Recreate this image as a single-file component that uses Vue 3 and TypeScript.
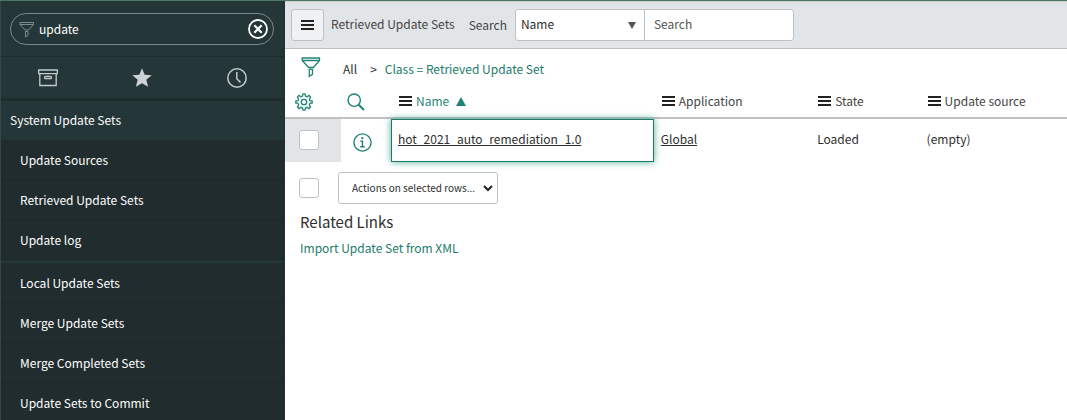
<script setup lang="ts">
import { ref } from 'vue'

interface Column {
  key: string
  label: string
  sorted?: boolean
}

const filterText = ref('update')
const searchField = ref('Name')
const searchText = ref('')
const action = ref('Actions on selected rows...')

const groups: string[][] = [
  ['Update Sources', 'Retrieved Update Sets', 'Update log'],
  ['Local Update Sets', 'Merge Update Sets', 'Merge Completed Sets', 'Update Sets to Commit'],
]

const columns: Column[] = [
  { key: 'name', label: 'Name', sorted: true },
  { key: 'application', label: 'Application' },
  { key: 'state', label: 'State' },
  { key: 'source', label: 'Update source' },
]
</script>

<template>
  <div class="page">
    <aside class="sidebar">
      <div class="filter-area">
        <div class="filter">
          <svg class="filter-icon" width="16" height="17" viewBox="0 0 16 17" fill="none" stroke="#7f8b8c">
            <path d="M1 1.5h13.500v2L9.500 9H6L1 3.500zM1 3.500h13.500M6.500 10.500h2.500v4l-2.500 1.500z" />
          </svg>
          <input v-model="filterText" aria-label="Filter navigator" type="text" />
          <button class="clear" type="button" aria-label="Clear filter">
            <svg width="20" height="20" viewBox="0 0 20 20" fill="none" stroke="#fff">
              <circle cx="10" cy="10" r="9" stroke-width="1.800" />
              <path d="M6.300 6.300l7.400 7.400M13.700 6.300l-7.400 7.400" stroke-width="2.200" />
            </svg>
          </button>
        </div>
      </div>
      <div class="tabs">
        <button type="button" aria-label="All applications">
          <svg width="20" height="18" viewBox="0 0 20 18" fill="none" stroke="#c3cacb" stroke-width="1.300">
            <path d="M.7 1h18.600v3.700H.7zM1.800 4.700v11.800h16.400V4.700" />
            <rect x="6.500" y="7.500" width="7" height="2.200" rx="1" />
          </svg>
        </button>
        <button type="button" aria-label="Favorites">
          <svg width="20" height="20" viewBox="0 0 20 20" fill="#cdd2d4">
            <path d="M10 .3l2.700 6.500 7 .4-5.400 4.500 1.800 7.100L10 15.200l-6.100 3.600 1.800-7.100L.3 7.200l7-.4z" />
          </svg>
        </button>
        <button type="button" aria-label="History">
          <svg width="20" height="20" viewBox="0 0 20 20" fill="none" stroke="#c3cacb" stroke-width="1.500">
            <circle cx="10" cy="10" r="9.200" />
            <path d="M9.800 4v6.700l3.700 3.700" />
          </svg>
        </button>
      </div>
      <nav>
        <h2>System Update Sets</h2>
        <ul v-for="(group, i) in groups" :key="i">
          <li v-for="item in group" :key="item"><a href="#">{{ item }}</a></li>
        </ul>
      </nav>
    </aside>

    <main class="content">
      <header class="toolbar">
        <button class="menu-button" type="button" aria-label="List menu"><span class="bars"></span></button>
        <h1>Retrieved Update Sets</h1>
        <label for="search-field">Search</label>
        <div class="search-group">
          <div class="select-wrap">
            <select id="search-field" v-model="searchField">
              <option>Name</option>
            </select>
            <svg width="8" height="7" viewBox="0 0 8 7" fill="#555"><path d="M0 0h8L4 7z" /></svg>
          </div>
          <input v-model="searchText" type="text" placeholder="Search" aria-label="Search text" />
        </div>
      </header>

      <div class="breadcrumb">
        <button class="icon-button" type="button" aria-label="Edit filter">
          <svg width="20" height="22" viewBox="0 0 20 22" fill="none" stroke="#1f8476" stroke-width="1.300">
            <path d="M1.200 1h17.300v2.500l-6.200 7H7.700L1.200 3.500zM1.200 3.500h17.300M8.300 12.300h3.200v5l-3.200 2z" />
          </svg>
        </button>
        <a class="all" href="#">All</a>
        <span class="arrow">&gt;</span>
        <a href="#">Class = Retrieved Update Set</a>
      </div>

      <table>
        <colgroup>
          <col class="col-check" />
          <col class="col-info" />
          <col class="col-name" />
          <col class="col-application" />
          <col class="col-state" />
          <col />
        </colgroup>
        <thead>
          <tr>
            <th class="check">
              <button class="icon-button" type="button" aria-label="Personalize list">
                <svg width="18" height="18" viewBox="0 0 18 18" fill="none" stroke="#1f8476" stroke-width="1.300">
                  <path d="M7.600 3 8 .8h2L10.400 3l1.700.7L14 2.400 15.600 4l-1.300 1.900.7 1.700 2.200.4v2l-2.200.4-.7 1.700 1.300 1.900-1.600 1.600-1.900-1.300-1.700.7-.4 2.200H8L7.600 15l-1.700-.7L4 15.600 2.400 14l1.300-1.900L3 10.400.8 10V8L3 7.600l.7-1.700L2.400 4 4 2.400l1.900 1.300z" />
                  <circle cx="9" cy="9" r="2.700" />
                </svg>
              </button>
            </th>
            <th class="info">
              <button class="icon-button" type="button" aria-label="Search columns">
                <svg width="18" height="18" viewBox="0 0 18 18" fill="none" stroke="#1f8476">
                  <circle cx="7.200" cy="7.200" r="6.200" stroke-width="1.400" />
                  <path d="M11.700 11.700l5.300 5.300" stroke-width="2" />
                </svg>
              </button>
            </th>
            <th v-for="column in columns" :key="column.key" :class="{ sorted: column.sorted }">
              <div class="heading">
                <button class="icon-button" type="button" :aria-label="column.label + ' menu'"><span class="bars"></span></button>
                <a href="#">{{ column.label }}</a>
                <svg v-if="column.sorted" width="10" height="9" viewBox="0 0 10 9" fill="#1f8476"><path d="M5 0l5 9H0z" /></svg>
              </div>
            </th>
          </tr>
        </thead>
        <tbody>
          <tr>
            <td class="check selected"><input type="checkbox" aria-label="Select record" /></td>
            <td class="info">
              <button class="icon-button" type="button" aria-label="Preview record">
                <svg width="19" height="19" viewBox="0 0 19 19" fill="none" stroke="#1f8476">
                  <circle cx="9.500" cy="9.500" r="8.600" stroke-width="1.400" />
                  <path d="M7.500 8.200h2v5.500M7.300 13.800h4.400" stroke-width="1.400" />
                  <circle cx="9.400" cy="5.200" r="1.100" fill="#1f8476" stroke="none" />
                </svg>
              </button>
            </td>
            <td class="active"><a href="#">hot_2021_auto_remediation_1.0</a></td>
            <td><a href="#">Global</a></td>
            <td>Loaded</td>
            <td>(empty)</td>
          </tr>
        </tbody>
      </table>

      <div class="actions">
        <input type="checkbox" aria-label="Select all" />
        <div class="select-wrap">
          <select v-model="action" aria-label="Actions on selected rows">
            <option>Actions on selected rows...</option>
          </select>
          <svg width="10" height="7" viewBox="0 0 10 7" fill="none" stroke="#222" stroke-width="2"><path d="M1 1l4 4 4-4" /></svg>
        </div>
      </div>

      <section class="related">
        <h3>Related Links</h3>
        <a href="#">Import Update Set from XML</a>
      </section>
    </main>
  </div>
</template>

<style>
body {
  background: #fff;
}
</style>

<style scoped>
.page {
  display: flex;
  min-height: 100vh;
  box-sizing: border-box;
  border-top: 1px solid #4c7865;
  overflow: hidden;
  font-family: "Noto Sans CJK SC", "Noto Sans", sans-serif;
  font-size: 12px;
  line-height: 20px;
  color: #2e2e2e;
}
.page * {
  box-sizing: border-box;
}
button, input, select {
  font: inherit;
  color: inherit;
  margin: 0;
}
button {
  display: block;
  padding: 0;
  border: 0;
  background: none;
  cursor: pointer;
}
svg {
  display: block;
  flex: none;
}
h1, h2, h3, ul {
  margin: 0;
  padding: 0;
  font-size: inherit;
  font-weight: 400;
  list-style: none;
}
a {
  color: #1b7b6b;
  text-decoration: none;
}

.sidebar {
  width: 285px;
  flex: none;
  height: calc(100vh - 1px);
  overflow: hidden;
  background: #253638;
  border-left: 1px solid #34484a;
  border-right: 1px solid #203032;
  color: #fff;
}
.filter-area {
  padding: 12px 10px 11px 9px;
  border-bottom: 1px solid #1d2c2e;
}
.filter {
  display: flex;
  align-items: center;
  height: 32px;
  padding: 0 5px 0 8px;
  border: 1px solid #7d8889;
  border-radius: 16px;
}
.filter input {
  flex: 1;
  min-width: 0;
  height: 24px;
  padding: 0 4px 2px;
  border: 0;
  outline: 0;
  background: none;
}
.tabs {
  display: grid;
  grid-template-columns: repeat(3, 1fr);
  height: 44px;
  border-bottom: 3px solid #1f2d2e;
}
.tabs button {
  display: grid;
  place-items: center;
}
nav h2 {
  padding: 9px;
  height: 39px;
}
nav ul {
  background: #202c2e;
}
nav ul + ul {
  border-top: 3px solid #253638;
}
nav li a {
  display: block;
  height: 40px;
  padding: 10px 19px 9px;
  border-bottom: 1px solid #1a2628;
  color: #fff;
}

.content {
  flex: 1;
  min-width: 0;
}
.toolbar {
  display: flex;
  align-items: center;
  height: 48px;
  padding: 0 6px;
  background: #e2e5e8;
  border-top: 1px solid #c9cccc;
  border-bottom: 1px solid #bdc0c0;
}
.menu-button {
  display: grid;
  place-items: center;
  width: 33px;
  height: 32px;
  border: 1px solid #bdc0c4;
  border-radius: 3px;
  background: #f0f1f3;
}
.bars {
  display: block;
  width: 13px;
  height: 10px;
  border-top: 2px solid #222;
  border-bottom: 2px solid #222;
  background: linear-gradient(#222, #222) center / 100% 2px no-repeat;
}
.toolbar h1 {
  margin: 0 14px 2px 7px;
  color: #444;
}
.toolbar label {
  margin-right: 8px;
  color: #444;
}
.search-group {
  display: flex;
  width: 279px;
  height: 32px;
  border: 1px solid #bdc0c4;
  border-radius: 3px;
  background: #fff;
}
.search-group input {
  flex: 1;
  min-width: 0;
  padding: 0 9px 2px;
  border: 0;
  background: none;
}
.search-group input::placeholder {
  color: #555;
  opacity: 1;
}
.select-wrap {
  display: grid;
  align-items: center;
}
.select-wrap > * {
  grid-area: 1 / 1;
}
.select-wrap select {
  appearance: none;
  width: 100%;
  height: 100%;
  border: 0;
  background: none;
}
.select-wrap svg {
  justify-self: end;
  pointer-events: none;
}
.search-group .select-wrap {
  width: 129px;
  border-right: 1px solid #bdc0c4;
}
.search-group select {
  padding: 0 5px 3px;
}
.search-group svg {
  margin-right: 8px;
}

.breadcrumb {
  display: flex;
  align-items: center;
  height: 38px;
  padding: 2px 16px 0;
}
.breadcrumb button {
  margin-bottom: 2px;
}
.breadcrumb .all {
  margin: 0 13px 0 22px;
  color: #2e2e2e;
}
.breadcrumb .arrow {
  margin-right: 8px;
}

table {
  width: 100%;
  table-layout: fixed;
  border-collapse: separate;
  border-spacing: 0;
}
.col-check { width: 56px; }
.col-info { width: 50px; }
.col-name { width: 33.6%; }
.col-application { width: 20%; }
.col-state { width: 14%; }
th, td {
  padding: 0 7px;
  text-align: left;
  font-weight: 400;
  white-space: nowrap;
}
th {
  height: 32px;
  border-bottom: 2px solid #c1c1c1;
  vertical-align: middle;
}
.heading {
  display: flex;
  align-items: center;
  gap: 4px;
  padding: 0 0 2px 1px;
}
.heading a {
  color: #444;
}
.sorted .heading a {
  color: #1f8476;
}
.heading svg {
  margin-left: 3px;
}
td {
  height: 43px;
  padding-bottom: 3px;
}
td a {
  color: #2e2e2e;
  text-decoration: underline;
}
th.check {
  padding: 0 10px;
}
th.info {
  padding: 0 6px;
}
td.check {
  padding: 0 14px 1px;
}
td.info {
  padding: 3px 12px 0;
}
.selected {
  background: #e2e5e8;
}
.active {
  position: relative;
  background: #fff;
  box-shadow: inset 0 0 0 1px #1f7a68, 0 0 7px #4fae96;
}
input[type="checkbox"] {
  appearance: none;
  display: block;
  width: 20px;
  height: 20px;
  border: 1px solid #bdc0c4;
  border-radius: 3px;
  background: #fff;
}

.actions {
  display: flex;
  align-items: center;
  gap: 19px;
  padding: 10px 14px 0;
}
.actions .select-wrap {
  width: 160px;
  height: 32px;
  border: 1px solid #bdc0c4;
  border-radius: 3px;
}
.actions select {
  padding: 0 13px;
  font-size: 10px;
}
.actions svg {
  margin-right: 4px;
}
.related {
  padding: 6px 15px;
}
.related h3 {
  margin-bottom: 4px;
  font-size: 15px;
  line-height: 24px;
}
</style>
